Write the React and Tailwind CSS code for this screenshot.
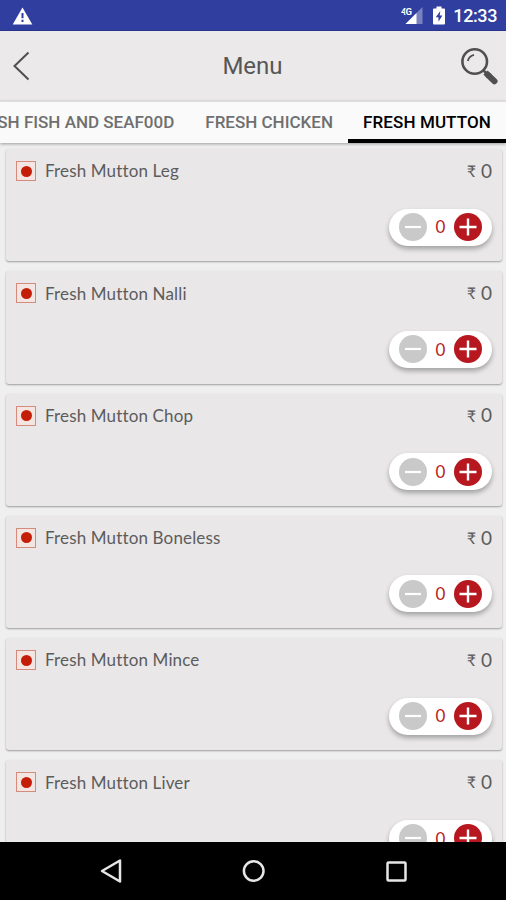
const items = [
  { name: "Fresh Mutton Leg", price: 0, qty: 0 },
  { name: "Fresh Mutton Nalli", price: 0, qty: 0 },
  { name: "Fresh Mutton Chop", price: 0, qty: 0 },
  { name: "Fresh Mutton Boneless", price: 0, qty: 0 },
  { name: "Fresh Mutton Mince", price: 0, qty: 0 },
  { name: "Fresh Mutton Liver", price: 0, qty: 0 },
];

const StatusBar = () => {
  return (
    <div className="h-[31px] shrink-0 bg-[#303f9f] border-b border-[#27348a] flex items-center justify-between pl-3 pr-[9px] text-white">
      <svg width="21" height="18" viewBox="0 0 21 18" className="mt-0.5">
        <path d="M10.5 0.5 20.3 17.5H0.7Z" fill="white" />
        <path d="M10.5 6v5.2M10.5 12.8v2.2" stroke="#303f9f" strokeWidth="2" />
      </svg>
      <div className="flex items-center">
        {/* Signal */}
        <svg width="22" height="19" viewBox="0 0 22 19" className="mr-[10px]">
          <path d="M21.5 1v17H4.5Z" fill="#7982c0" />
          <path d="M15.5 7v11H4.5Z" fill="white" />
          <text
            x="0"
            y="8.5"
            fontSize="9.5"
            fontWeight="700"
            fill="white"
            stroke="#303f9f"
            strokeWidth="2"
            paintOrder="stroke"
            fontFamily="Roboto, sans-serif"
            textLength="11"
          >
            4G
          </text>
        </svg>
        {/* Battery */}
        <svg width="12" height="19" viewBox="0 0 12 19" className="mr-[8px]">
          <path d="M3.5 0.5h5v2H11a1 1 0 0 1 1 1V17.5a1 1 0 0 1-1 1H1a1 1 0 0 1-1-1V3.5a1 1 0 0 1 1-1h2.5Z" fill="white" />
          <path d="M7.3 5 2.8 11.2h2.7V15.8L9.4 9.6H6.7Z" fill="#303f9f" />
        </svg>
        <span className="text-[18px] leading-none font-medium font-[Roboto,sans-serif] tracking-[-0.4px] mt-[2px]">
          12:33
        </span>
      </div>
    </div>
  );
};

const Header = () => {
  return (
    <header className="h-[70px] shrink-0 bg-[#ebe9ea] flex items-center justify-between pl-[13px] pr-[7px]">
      <svg width="17" height="30" viewBox="0 0 17 30" className="mr-[15px]">
        <path d="M15.5 1.5 1.5 15l14 13.5" fill="none" stroke="#4f4f4f" strokeWidth="2" />
      </svg>
      <h1 className="text-2xl text-[#575757] font-[Roboto,sans-serif]">Menu</h1>
      <svg width="39" height="39" viewBox="0 0 39 39">
        <circle cx="14.7" cy="14.5" r="12.3" fill="none" stroke="#505050" strokeWidth="2.6" />
        <path d="M7.8 14c.7-3.2 2.7-5.2 6.2-6.2" fill="none" stroke="#505050" strokeWidth="1.8" />
        <path d="M23.5 23.5l3.5 3.5" stroke="#505050" strokeWidth="2.5" />
        <path d="M25.5 25.5 29 29" stroke="#505050" strokeWidth="6" />
        <path d="M28.5 28.5 34.5 34.2" stroke="#505050" strokeWidth="6" strokeLinecap="round" />
      </svg>
    </header>
  );
};

const Tabs = () => {
  return (
    <nav className="relative h-[42px] shrink-0 overflow-hidden bg-[#fafafa] border-t border-[#dedddd] shadow-[0_1px_3px_rgba(0,0,0,0.35)] flex justify-end whitespace-nowrap text-[17px] font-medium font-[Roboto,sans-serif] text-[#6f6f6f]">
      <div className="flex items-center pl-[15px] pr-[16px]">FRESH FISH AND SEAF00D</div>
      <div className="flex items-center px-[15px]">FRESH CHICKEN</div>
      <div className="flex items-center justify-center w-[158px] shrink-0 text-black border-b-4 border-black pt-1 tracking-[0.1px]">
        FRESH MUTTON
      </div>
    </nav>
  );
};

const Stepper = ({ qty }) => {
  return (
    <div className="w-[103px] h-[37px] rounded-full bg-white shadow-[0_3px_5px_rgba(0,0,0,0.3)] flex items-center justify-between px-[10px]">
      <svg width="28" height="28" viewBox="0 0 28 28">
        <circle cx="14" cy="14" r="14" fill="#c9c9c9" />
        <path d="M6 14h16" stroke="white" strokeWidth="2.2" />
      </svg>
      <span className="text-[17px] text-[#b71c22]">{qty}</span>
      <svg width="28" height="28" viewBox="0 0 28 28">
        <circle cx="14" cy="14" r="14" fill="#b71820" />
        <path d="M5.5 14h17M14 5.5v17" stroke="white" strokeWidth="2.4" />
      </svg>
    </div>
  );
};

const ItemCard = ({ item }) => {
  return (
    <div className="h-[112.3px] shrink-0 rounded-[3px] bg-[#e9e7e8] shadow-[0_1px_2px_rgba(0,0,0,0.35)] pl-[10px] pr-[10px] pt-[12px] flex flex-col items-end">
      <div className="w-full h-5 flex items-center text-[#5c5c5c]">
        <div className="w-5 h-5 border border-[#d58b7c] bg-[#f3e5e1] flex items-center justify-center">
          <div className="size-[11px] rounded-full bg-[#c41e08]"></div>
        </div>
        <span className="ml-[9px] text-[17px] tracking-[0.15px]">{item.name}</span>
        <span className="ml-auto flex items-center gap-[5px]">
          <span className="text-[16px]">₹</span>
          <span className="text-[19px]">{item.price}</span>
        </span>
      </div>
      <div className="mt-[27.5px]">
        <Stepper qty={item.qty} />
      </div>
    </div>
  );
};

const NavigationBar = () => {
  return (
    <div className="h-[58px] shrink-0 bg-black flex items-center justify-between pl-[99px] pr-[99px]">
      <svg width="23" height="26" viewBox="0 0 23 26">
        <path d="M21 2.5v21L3 13Z" fill="none" stroke="#e6e6e6" strokeWidth="2.5" strokeLinejoin="round" />
      </svg>
      <svg width="24" height="24" viewBox="0 0 24 24">
        <circle cx="11.7" cy="12" r="9.8" fill="none" stroke="#e6e6e6" strokeWidth="2.5" />
      </svg>
      <svg width="21" height="21" viewBox="0 0 21 21">
        <rect x="1.5" y="1.5" width="18" height="18" rx="1" fill="none" stroke="#e6e6e6" strokeWidth="2.5" />
      </svg>
    </div>
  );
};

const App = () => {
  return (
    <div className="w-[506px] h-[900px] overflow-hidden flex flex-col bg-[#f0efef] font-[Lato,sans-serif]">
      <StatusBar />
      <Header />
      <Tabs />
      <main className="flex-1 min-h-0 overflow-hidden flex flex-col gap-[10px] pt-[6px] pl-[6px] pr-[4px]">
        {items.map((item) => (
          <ItemCard key={item.name} item={item} />
        ))}
      </main>
      <NavigationBar />
    </div>
  );
};

export default App;
